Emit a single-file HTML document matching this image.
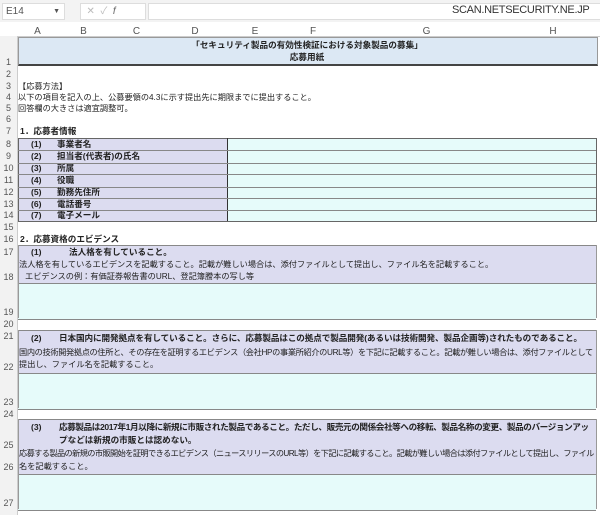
<!DOCTYPE html><html><head><meta charset="utf-8"><style>
body{margin:0;width:600px;height:515px;overflow:hidden;background:#fff;font-family:"Liberation Sans","Noto Sans CJK JP",sans-serif;position:relative;color:#222}
.a{position:absolute}
.t{position:absolute;font-size:8.2px;white-space:nowrap;line-height:11px}
.b{font-weight:bold;font-size:8.6px}
.rh{position:absolute;left:0;width:17px;font-size:9px;color:#555;text-align:center}
.ch{position:absolute;top:26px;font-size:10px;color:#555;text-align:center}
</style></head><body>
<div class="a" style="left:0;top:0;width:600px;height:22px;background:#f3f3f3"></div>
<div class="a" style="left:2px;top:3px;width:58px;height:15px;background:#fff;border:1px solid #ddd;font-size:10px;color:#555;line-height:15px;padding-left:3px">E14<span style="position:absolute;right:4px;font-size:7px">▼</span></div>
<div class="a" style="left:80px;top:3px;width:64px;height:15px;background:#fff;border:1px solid #ddd;font-size:10px;color:#bbb;line-height:15px">&nbsp;&nbsp;✕ &nbsp;✓ &nbsp;<i style="color:#666">f</i></div>
<div class="a" style="left:148px;top:3px;width:452px;height:15px;background:#fff;border:1px solid #ddd"></div>
<div class="a" style="left:452px;top:4px;font-size:11px;color:#333;letter-spacing:-0.3px">SCAN.NETSECURITY.NE.JP</div>
<div class="a" style="left:0;top:22px;width:600px;height:14px;background:#fff;border-bottom:1px solid #ccc"></div>
<div class="a" style="left:0;top:36px;width:17px;height:479px;background:#f2f2f2;border-right:1px solid #ccc"></div>
<div class="ch" style="left:18px;width:39px">A</div><div class="ch" style="left:57px;width:53px">B</div><div class="ch" style="left:110px;width:53px">C</div><div class="ch" style="left:163px;width:64px">D</div><div class="ch" style="left:227px;width:56px">E</div><div class="ch" style="left:283px;width:60px">F</div><div class="ch" style="left:343px;width:167px">G</div><div class="ch" style="left:510px;width:86px">H</div>
<div class="a" style="left:18px;top:37px;width:578px;height:26px;background:#dce8f4;border:1px solid #999;border-bottom:2px solid #444"></div>
<div class="t b" style="left:18px;width:578px;text-align:center;top:40px">「セキュリティ製品の有効性検証における対象製品の募集」</div>
<div class="t b" style="left:18px;width:578px;text-align:center;top:52px">応募用紙</div>
<div class="t" style="left:18px;top:81px">【応募方法】</div>
<div class="t" style="left:18px;top:92px">以下の項目を記入の上、公募要領の4.3に示す提出先に期限までに提出すること。</div>
<div class="t" style="left:18px;top:103px">回答欄の大きさは適宜調整可。</div>
<div class="t b" style="left:20px;top:126px">1．応募者情報</div>
<div class="a" style="left:18px;top:138px;width:210px;height:83px;background:#dcdcf0"></div>
<div class="a" style="left:228px;top:138px;width:368px;height:83px;background:#e6fbfa"></div>
<div class="a" style="left:18px;top:138px;width:577px;height:82px;border:1px solid #666"></div>
<div class="a" style="left:227px;top:138px;width:1px;height:83px;background:#333"></div>
<div class="a" style="left:18px;top:150px;width:578px;height:12px;border-top:1px solid #888;border-bottom:1px solid #888"></div>
<div class="a" style="left:18px;top:174px;width:578px;height:12px;border-top:1px solid #888;border-bottom:1px solid #888"></div>
<div class="a" style="left:18px;top:198px;width:578px;height:11px;border-top:1px solid #888;border-bottom:1px solid #888"></div>
<div class="t b" style="left:31px;top:139px">(1)</div><div class="t b" style="left:57px;top:139px">事業者名</div>
<div class="t b" style="left:31px;top:151px">(2)</div><div class="t b" style="left:57px;top:151px">担当者(代表者)の氏名</div>
<div class="t b" style="left:31px;top:163px">(3)</div><div class="t b" style="left:57px;top:163px">所属</div>
<div class="t b" style="left:31px;top:175px">(4)</div><div class="t b" style="left:57px;top:175px">役職</div>
<div class="t b" style="left:31px;top:187px">(5)</div><div class="t b" style="left:57px;top:187px">勤務先住所</div>
<div class="t b" style="left:31px;top:199px">(6)</div><div class="t b" style="left:57px;top:199px">電話番号</div>
<div class="t b" style="left:31px;top:210px">(7)</div><div class="t b" style="left:57px;top:210px">電子メール</div>
<div class="t b" style="left:20px;top:234px">2．応募資格のエビデンス</div>
<div class="a" style="left:18px;top:245px;width:578px;height:38px;background:#dcdcf0;border-top:1px solid #888"></div>
<div class="a" style="left:18px;top:283px;width:578px;height:35px;background:#e6fbfa;border-top:1px solid #888;border-bottom:1px solid #888"></div>
<div class="a" style="left:18px;top:245px;width:577px;height:73px;border-left:1px solid #999;border-right:1px solid #999"></div>
<div class="t b" style="left:31px;top:247px">(1)</div><div class="t b" style="left:69px;top:247px">法人格を有していること。</div>
<div class="t" style="left:19px;top:259px">法人格を有しているエビデンスを記載すること。記載が難しい場合は、添付ファイルとして提出し、ファイル名を記載すること。</div>
<div class="t" style="left:25px;top:271px">エビデンスの例：有価証券報告書のURL、登記簿謄本の写し等</div>
<div class="a" style="left:18px;top:330px;width:578px;height:43px;background:#dcdcf0;border-top:1px solid #888"></div>
<div class="a" style="left:18px;top:373px;width:578px;height:35px;background:#e6fbfa;border-top:1px solid #888;border-bottom:1px solid #888"></div>
<div class="a" style="left:18px;top:330px;width:577px;height:78px;border-left:1px solid #999;border-right:1px solid #999"></div>
<div class="t b" style="left:31px;top:333px">(2)</div><div class="t b" style="left:59px;top:333px;letter-spacing:-0.1px">日本国内に開発拠点を有していること。さらに、応募製品はこの拠点で製品開発(あるいは技術開発、製品企画等)されたものであること。</div>
<div class="t" style="left:19px;top:347px;letter-spacing:-0.35px">国内の技術開発拠点の住所と、その存在を証明するエビデンス（会社HPの事業所紹介のURL等）を下記に記載すること。記載が難しい場合は、添付ファイルとして</div>
<div class="t" style="left:19px;top:359px">提出し、ファイル名を記載すること。</div>
<div class="a" style="left:18px;top:419px;width:578px;height:55px;background:#dcdcf0;border-top:1px solid #888"></div>
<div class="a" style="left:18px;top:474px;width:578px;height:35px;background:#e6fbfa;border-top:1px solid #888;border-bottom:1px solid #888"></div>
<div class="a" style="left:18px;top:419px;width:577px;height:90px;border-left:1px solid #999;border-right:1px solid #999"></div>
<div class="t b" style="left:31px;top:422px">(3)</div><div class="t b" style="left:59px;top:422px;letter-spacing:-0.4px">応募製品は2017年1月以降に新規に市販された製品であること。ただし、販売元の関係会社等への移転、製品名称の変更、製品のバージョンアッ</div>
<div class="t b" style="left:59px;top:435px">プなどは新規の市販とは認めない。</div>
<div class="t" style="left:19px;top:448px;letter-spacing:-0.6px">応募する製品の新規の市販開始を証明できるエビデンス（ニュースリリースのURL等）を下記に記載すること。記載が難しい場合は添付ファイルとして提出し、ファイル</div>
<div class="t" style="left:19px;top:461px">名を記載すること。</div>
<div class="rh" style="top:57px">1</div><div class="rh" style="top:69px">2</div><div class="rh" style="top:81px">3</div><div class="rh" style="top:92px">4</div><div class="rh" style="top:103px">5</div><div class="rh" style="top:114px">6</div><div class="rh" style="top:126px">7</div><div class="rh" style="top:139px">8</div><div class="rh" style="top:151px">9</div><div class="rh" style="top:163px">10</div><div class="rh" style="top:175px">11</div><div class="rh" style="top:187px">12</div><div class="rh" style="top:199px">13</div><div class="rh" style="top:210px">14</div><div class="rh" style="top:222px">15</div><div class="rh" style="top:234px">16</div><div class="rh" style="top:247px">17</div><div class="rh" style="top:272px">18</div><div class="rh" style="top:307px">19</div><div class="rh" style="top:319px">20</div><div class="rh" style="top:331px">21</div><div class="rh" style="top:362px">22</div><div class="rh" style="top:397px">23</div><div class="rh" style="top:409px">24</div><div class="rh" style="top:440px">25</div><div class="rh" style="top:462px">26</div><div class="rh" style="top:498px">27</div>
</body></html>
